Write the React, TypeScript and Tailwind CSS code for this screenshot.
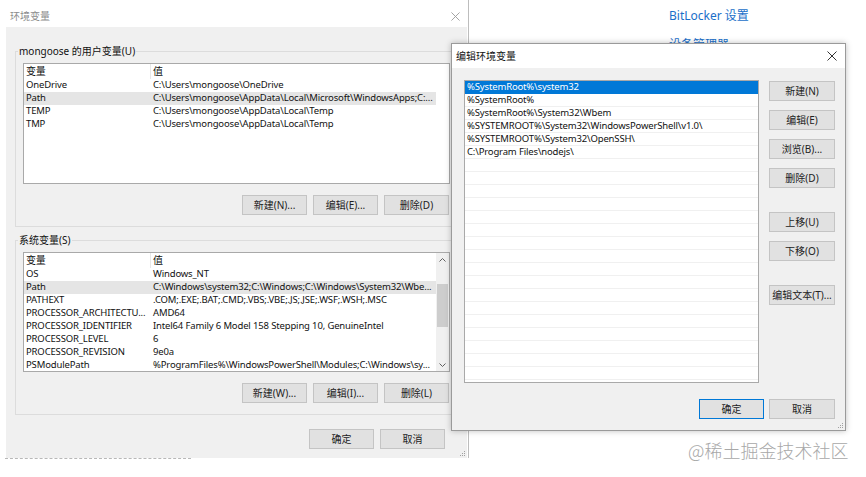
import React from 'react';

type Row = [string, string];

const userVars: Row[] = [
  ['OneDrive', 'C:\\Users\\mongoose\\OneDrive'],
  ['Path', 'C:\\Users\\mongoose\\AppData\\Local\\Microsoft\\WindowsApps;C:...'],
  ['TEMP', 'C:\\Users\\mongoose\\AppData\\Local\\Temp'],
  ['TMP', 'C:\\Users\\mongoose\\AppData\\Local\\Temp'],
];

const systemVars: Row[] = [
  ['OS', 'Windows_NT'],
  ['Path', 'C:\\Windows\\system32;C:\\Windows;C:\\Windows\\System32\\Wbe...'],
  ['PATHEXT', '.COM;.EXE;.BAT;.CMD;.VBS;.VBE;.JS;.JSE;.WSF;.WSH;.MSC'],
  ['PROCESSOR_ARCHITECTU...', 'AMD64'],
  ['PROCESSOR_IDENTIFIER', 'Intel64 Family 6 Model 158 Stepping 10, GenuineIntel'],
  ['PROCESSOR_LEVEL', '6'],
  ['PROCESSOR_REVISION', '9e0a'],
  ['PSModulePath', '%ProgramFiles%\\WindowsPowerShell\\Modules;C:\\Windows\\sy...'],
];

const pathEntries = [
  '%SystemRoot%\\system32',
  '%SystemRoot%',
  '%SystemRoot%\\System32\\Wbem',
  '%SYSTEMROOT%\\System32\\WindowsPowerShell\\v1.0\\',
  '%SYSTEMROOT%\\System32\\OpenSSH\\',
  'C:\\Program Files\\nodejs\\',
];

const CloseIcon = ({ size, color }: { size: number; color: string }) => (
  <svg width={size} height={size} viewBox="0 0 10 10">
    <path d="M0.5 0.5 L9.5 9.5 M9.5 0.5 L0.5 9.5" stroke={color} strokeWidth="1" fill="none" />
  </svg>
);

const Grip = () => (
  <svg width="7" height="7" viewBox="0 0 7 7">
    <rect x="5" y="1" width="1" height="1" fill="#a0a0a0" />
    <rect x="3" y="3" width="1" height="1" fill="#a0a0a0" />
    <rect x="5" y="3" width="1" height="1" fill="#a0a0a0" />
    <rect x="1" y="5" width="1" height="1" fill="#a0a0a0" />
    <rect x="3" y="5" width="1" height="1" fill="#a0a0a0" />
    <rect x="5" y="5" width="1" height="1" fill="#a0a0a0" />
  </svg>
);

const Btn = ({ children, focused, wide }: { children: React.ReactNode; focused?: boolean; wide?: boolean }) => (
  <div
    className={`flex h-[20px] shrink-0 items-center justify-center border bg-[#e1e1e1] text-[10px] text-[#222] ${
      focused ? 'border-[#0078d7]' : 'border-[#c4c4c4]'
    } ${wide ? 'w-[66px]' : 'w-[65px]'}`}
  >
    {children}
  </div>
);

function VarTable({ rows, selected, scroll, height }: { rows: Row[]; selected: number; scroll?: boolean; height: string }) {
  return (
    <div className={`flex w-[427px] overflow-hidden border border-[#a9a9a9] bg-white ${height}`}>
      <div className="flex w-[412px] shrink-0 flex-col text-[9.5px] tracking-[-0.15px] text-[#111]">
        <div className="flex h-[15px] shrink-0 items-center text-[10px]">
          <div className="w-[127px] shrink-0 border-r border-[#e8e8e8] pl-[2px]">变量</div>
          <div className="pl-[2px]">值</div>
        </div>
        {rows.map(([k, v], i) => (
          <div key={k} className={`flex h-[13px] shrink-0 items-center whitespace-nowrap ${i === selected ? 'bg-[#e5e5e5]' : ''}`}>
            <div className="w-[128px] shrink-0 overflow-hidden pl-[2px]">{k}</div>
            <div className="min-w-0 flex-1 overflow-hidden pl-[1px]">{v}</div>
          </div>
        ))}
      </div>
      {scroll && (
        <div className="ml-auto flex w-[13px] shrink-0 flex-col items-center bg-[#f0f0f0]">
          <div className="flex h-[13px] items-center">
            <svg width="7" height="4" viewBox="0 0 7 4">
              <path d="M0.5 3.5 L3.5 0.5 L6.5 3.5" stroke="#606060" fill="none" />
            </svg>
          </div>
          <div className="h-[18px]" />
          <div className="h-[43px] w-[11px] bg-[#cdcdcd]" />
          <div className="flex-1" />
          <div className="flex h-[13px] items-center">
            <svg width="7" height="4" viewBox="0 0 7 4">
              <path d="M0.5 0.5 L3.5 3.5 L6.5 0.5" stroke="#606060" fill="none" />
            </svg>
          </div>
        </div>
      )}
    </div>
  );
}

function GroupBox({ label, children, className }: { label: string; children: React.ReactNode; className?: string }) {
  return (
    <div className={`relative w-[445px] shrink-0 border border-[#dcdcdc] px-[7px] pt-[11px] pb-[11px] ${className ?? ''}`}>
      <span className="absolute -top-[8px] left-[2px] bg-[#f0f0f0] px-[1px] text-[10px] text-[#111]">{label}</span>
      {children}
    </div>
  );
}

export default function App() {
  return (
    <div className="relative h-[477px] w-[866px] overflow-hidden bg-white font-['Noto_Sans','Noto_Sans_CJK_SC',sans-serif]">
      {/* background settings window */}
      <div className="absolute left-[669px] top-[7px] flex flex-col gap-[11px] text-[12px] text-[#1a6fc9]">
        <span>BitLocker 设置</span>
        <span>设备管理器</span>
      </div>

      {/* 环境变量 window */}
      <div className="absolute left-0 top-0 flex h-[458px] w-[469px] flex-col border-r border-[#bdbdbd] bg-white">
        <div className="flex h-[27px] shrink-0 items-center justify-between pt-[5px] pl-[10px] pr-[8px]">
          <span className="text-[10px] text-[#8c8c8c]">环境变量</span>
          <CloseIcon size={9} color="#9a9a9a" />
        </div>
        <div className="relative ml-[6px] mr-[1px] flex flex-1 flex-col bg-[#f0f0f0] pl-[9px] pt-[24px]">
          <GroupBox label="mongoose 的用户变量(U)">
            <VarTable rows={userVars} selected={1} height="h-[121px]" />
            <div className="mt-[11px] flex w-[426px] justify-end gap-[6px]">
              <Btn>新建(N)...</Btn>
              <Btn>编辑(E)...</Btn>
              <Btn>删除(D)</Btn>
            </div>
          </GroupBox>
          <GroupBox label="系统变量(S)" className="mt-[13px]">
            <VarTable rows={systemVars} selected={1} scroll height="h-[120px]" />
            <div className="mt-[11px] flex w-[426px] justify-end gap-[6px]">
              <Btn>新建(W)...</Btn>
              <Btn>编辑(I)...</Btn>
              <Btn>删除(L)</Btn>
            </div>
          </GroupBox>
          <div className="mt-[14px] flex gap-[6px] pl-[294px]">
            <Btn>确定</Btn>
            <Btn>取消</Btn>
          </div>
          <div className="absolute right-[1px] bottom-[1px]">
            <Grip />
          </div>
        </div>
      </div>
      <div className="absolute left-[5px] top-[458px] h-[2px] w-[186px] border-t border-dashed border-[#b8b8b8]" />

      {/* 编辑环境变量 dialog */}
      <div className="absolute left-[451px] top-[43px] flex h-[388px] w-[395px] flex-col border border-[#9a9a9a] bg-[#f0f0f0] shadow-[0_0_6px_rgba(0,0,0,0.25)]">
        <div className="flex h-[24px] shrink-0 items-center justify-between bg-white pl-[4px] pr-[8px]">
          <span className="text-[10px] text-[#111]">编辑环境变量</span>
          <CloseIcon size={10} color="#333" />
        </div>
        <div className="relative flex flex-1 flex-col pl-[12px] pr-[10px] pt-[12px]">
          <div className="flex gap-[10px]">
            <div className="flex h-[303px] w-[295px] shrink-0 flex-col overflow-hidden border border-[#a9a9a9] bg-white text-[9.5px] tracking-[-0.15px] text-[#111]">
              {Array.from({ length: 23 }).map((_, i) => (
                <div
                  key={i}
                  className={`flex h-[13px] shrink-0 items-center whitespace-nowrap pl-[2px] ${
                    i === 0 ? 'bg-[#0078d7] text-white' : 'border-b border-[#f0f0f0]'
                  }`}
                >
                  {pathEntries[i] ?? ''}
                </div>
              ))}
            </div>
            <div className="flex flex-col pt-[1px]">
              <div className="flex flex-col gap-[9px]">
                <Btn wide>新建(N)</Btn>
                <Btn wide>编辑(E)</Btn>
                <Btn wide>浏览(B)...</Btn>
                <Btn wide>删除(D)</Btn>
              </div>
              <div className="mt-[24px] flex flex-col gap-[9px]">
                <Btn wide>上移(U)</Btn>
                <Btn wide>下移(O)</Btn>
              </div>
              <div className="mt-[24px]">
                <Btn wide>编辑文本(T)...</Btn>
              </div>
            </div>
          </div>
          <div className="mt-[16px] flex justify-end gap-[5px]">
            <Btn focused>确定</Btn>
            <Btn wide>取消</Btn>
          </div>
          <div className="absolute right-[1px] bottom-[1px]">
            <Grip />
          </div>
        </div>
      </div>

      {/* watermark */}
      <div className="absolute left-[688px] top-[438px] font-['Noto_Sans_CJK_SC',sans-serif] text-[18px] leading-[24px] font-light text-[#a8a8a8]">
        @稀土掘金技术社区
      </div>
    </div>
  );
}
